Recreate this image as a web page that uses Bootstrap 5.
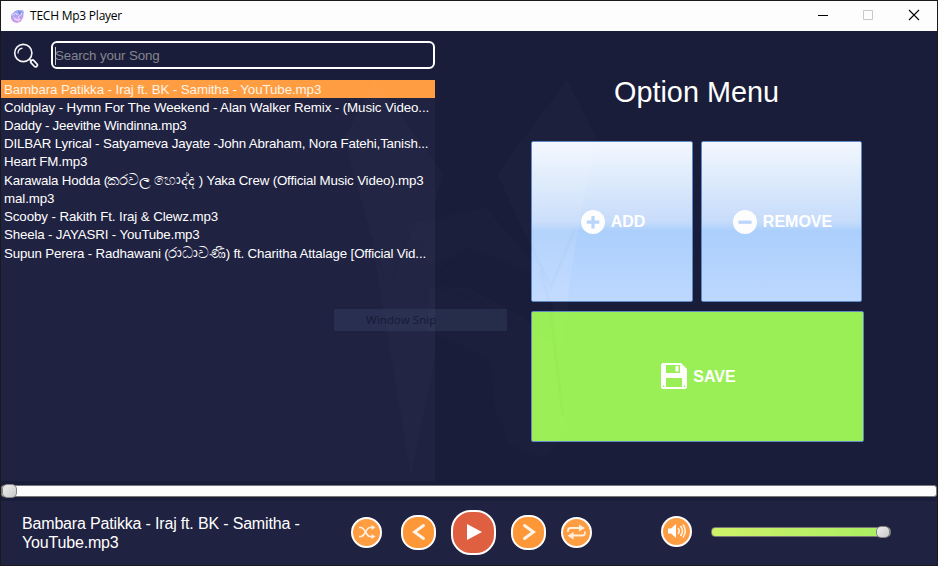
<!DOCTYPE html>
<html lang="en">
<head>
<meta charset="utf-8">
<title>TECH Mp3 Player</title>
<link href="https://cdn.jsdelivr.net/npm/bootstrap@5.3.0/dist/css/bootstrap.min.css" rel="stylesheet">
<style>
body{margin:0;background:#1a1d39;font-family:"Liberation Sans",Arial,sans-serif;color:#fff;overflow:hidden}
.app-window{width:938px;height:566px;border:1px solid #1a1a1d}
.title-bar{height:30px;background:#fdfdfd;color:#000;font:12px "Open Sans","Noto Sans",sans-serif;padding-left:9px}
.title-bar .caption-text{margin-left:5px;letter-spacing:-.23px;font-size:12px;padding-bottom:2px}
.win-btn{width:46px;height:30px}
.win-btn svg{margin-left:1px}
.main-area{height:450px}
.left-pane{width:434px}
.search-row{height:49px;padding:0 0 2px 11px}
.search-box{width:384px;height:28px;margin-left:10px;border:2px solid #fff;border-radius:6px;background:transparent;color:#84858f;font-size:13.33px;letter-spacing:-.14px;padding:2px 2px 0;line-height:22px}
.caret{width:1px;height:18px;background:#ccc;margin-right:-1px}
.song-list{height:401px;background:#202242;font-size:13.33px}
.song{height:18px;line-height:20px;padding:0 3px;white-space:nowrap;color:#fff;letter-spacing:-.1px}
.song.tall{height:19px;line-height:21px}
.song.tight{letter-spacing:-.165px}
.song.tighter{letter-spacing:-.22px}
.sinhala{font-size:15.2px;letter-spacing:0;line-height:1;margin-left:-1px}
.song.current{background:#ff9d42;color:#fff4e6}
.menu-title{font-size:28.8px;line-height:34px;margin-top:44px;padding-left:21px}
.option-grid{display:grid;grid-template-columns:162px 161px;gap:9px 8px;margin:32px 0 0 95.5px;width:333px}
.opt{border:1px solid #5f88c5;border-radius:2px;color:#fff;font-weight:700;font-size:16px;padding:0 0 0 3px;gap:6px}
.opt.blue{height:161px;background:linear-gradient(#f3f7ff 0%,#dceafb 25%,#c7dcfb 50%,#abcffc 56%,#bdd8ff 100%)}
.opt.green{height:131px;width:333px;grid-column:1/3;background:#9bef56}
.opt.green svg{margin-top:-1px}
.seek-wrap{height:20px;padding-top:4px}
.seek{height:12px;background:#fdfdfd;border:1px solid #777;border-radius:3px}
.knob{width:15px;height:14px;border:1px solid #858585;border-radius:5px;background:linear-gradient(135deg,#eee,#c9c9c9)}
.player-bar{height:64px;background:#202242;padding-bottom:2px}
.now-playing{width:330px;padding:2px 0 0 21px;font-size:16px;line-height:19px;letter-spacing:-.17px}
.round-btn{border:2px solid #fff;background:#ff9d42;color:#fff;padding:0;border-radius:50%;width:31px;height:31px;display:flex;align-items:center;justify-content:center;flex:none;margin-left:15px}
.round-btn.step{width:35px;height:35px;border-radius:16px;background:#fd9737}
.round-btn.play{width:45px;height:45px;border-radius:20px;background:#df5f41}
.round-btn.shuffle{margin-left:20px}
.round-btn.prev{margin-left:19px}
.round-btn.speaker{margin:0 0 2px 69px}
.volume{width:180px;height:10px;margin-left:19px;border:1px solid #777;border-radius:4px;background:linear-gradient(90deg,#cff269,#a8ee62)}
.volume .knob{width:14px;height:12px}
.ghost{left:0;top:0;pointer-events:none}
.snip{left:334px;top:309px;width:173px;height:22px;background:rgba(65,85,120,.27);color:#161936;font:11.6px/22px "Open Sans","Noto Sans",sans-serif;padding-left:32px;pointer-events:none}
svg{display:block;flex:none}
</style>
</head>
<body>
<div class="app-window position-relative">
 <header class="title-bar d-flex align-items-center">
  <svg width="15" height="15" viewBox="0 0 15 15"><defs><linearGradient id="lg" x1="0" y1="0" x2=".3" y2="1"><stop offset="0" stop-color="#91a9f2"/><stop offset="1" stop-color="#d49aec"/></linearGradient></defs><path d="M5 2 8 1l5 .3.8 2-.6 5-2.6 4.4-4 1.3-3.6-1.3L1 9.5V6z" fill="url(#lg)"/><path d="M2 6.5 6 4l1 2 4-3 1 2-4 3 2 3-4-1-3-2M4 10l5 2" fill="none" stroke="#f0e8ff" stroke-width=".8"/><path d="m8 2 4 1-3 3z" fill="#6f91e5"/></svg>
  <span class="caption-text">TECH Mp3 Player</span>
  <div class="d-flex ms-auto">
   <div class="win-btn"><svg width="46" height="30"><path d="M18 14.5h10" stroke="#000"/></svg></div>
   <div class="win-btn"><svg width="46" height="30"><path d="M17.5 9.5h9v9h-9z" fill="none" stroke="#c8c8c8"/></svg></div>
   <div class="win-btn"><svg width="46" height="30"><path d="m17 9 10 10m0-10L17 19" stroke="#000" stroke-width="1.1"/></svg></div>
  </div>
 </header>
 <main class="main-area d-flex">
  <section class="left-pane">
   <div class="search-row d-flex align-items-center">
    <svg width="29" height="29" viewBox="0 0 29 29" fill="none" stroke="#f5f5fa"><circle cx="11.3" cy="13" r="8.6" stroke-width="1.6"/><path d="M6 13.400c0-3 2-5 4.500-5.300" stroke-width="1.200"/><path d="m17.500 19.400 2 2" stroke-width="1.500"/><rect x="-1.700" y="-4" width="3.600" height="8" rx="1.800" transform="translate(22 23.500) rotate(-43)" stroke-width="1.700"/></svg>
    <div class="search-box d-flex align-items-center"><span class="caret"></span><span>Search your Song</span></div>
   </div>
   <div class="song-list">
    <div class="song current"><span>Bambara Patikka - Iraj ft. BK - Samitha - YouTube.mp3</span></div>
    <div class="song"><span>Coldplay - Hymn For The Weekend - Alan Walker Remix - (Music Video...</span></div>
    <div class="song tighter"><span>Daddy - Jeevithe Windinna.mp3</span></div>
    <div class="song tight"><span>DILBAR Lyrical - Satyameva Jayate -John Abraham, Nora Fatehi,Tanish...</span></div>
    <div class="song tight"><span>Heart FM.mp3</span></div>
    <div class="song tall tight"><span>Karawala Hodda (<span class="sinhala">කරවල හොද්ද</span> ) Yaka Crew (Official Music Video).mp3</span></div>
    <div class="song"><span>mal.mp3</span></div>
    <div class="song"><span>Scooby - Rakith Ft. Iraj &amp; Clewz.mp3</span></div>
    <div class="song tight"><span>Sheela - JAYASRI - YouTube.mp3</span></div>
    <div class="song tall tight"><span>Supun Perera - Radhawani (<span class="sinhala">රාධාවණී</span>) ft. Charitha Attalage [Official Vid...</span></div>
   </div>
  </section>
  <section class="flex-grow-1">
   <h1 class="menu-title fw-normal text-center mb-0">Option Menu</h1>
   <div class="option-grid">
    <button class="opt blue d-flex align-items-center justify-content-center"><svg width="24" height="24"><circle cx="12" cy="12" r="12" fill="#fdfdfd"/><path d="M12 6v12.500M5.800 12.200h12.500" stroke="#b9d5fb" stroke-width="3.200"/></svg>ADD</button>
    <button class="opt blue d-flex align-items-center justify-content-center"><svg width="24" height="24"><circle cx="12" cy="12" r="12" fill="#fdfdfd"/><path d="M5.500 12.200h13" stroke="#b9d5fb" stroke-width="3.200"/></svg>REMOVE</button>
    <button class="opt green d-flex align-items-center justify-content-center"><svg width="26" height="26"><path d="M1.500 0H20l6 6v18.500l-1.500 1.500h-23L0 24.500v-23z" fill="#fff"/><path d="M5 2h14v8H5zM5 15h16v9H5z" fill="#9bef56"/><path d="M14.500 3h3v5.500h-3z" fill="#fff"/><path d="M2 22.500h1.200V24H2zm20.800 0H24V24h-1.200z" fill="#9bef56"/></svg>SAVE</button>
   </div>
  </section>
 </main>
 <div class="seek-wrap"><div class="seek d-flex align-items-center"><span class="knob"></span></div></div>
 <footer class="player-bar d-flex align-items-center">
  <div class="now-playing">Bambara Patikka - Iraj ft. BK - Samitha - YouTube.mp3</div>
  <button class="round-btn shuffle"><svg width="18" height="14" viewBox="0 0 18 14" fill="none" stroke="#fff0de" stroke-width="1.700"><path d="M1 2.500h2C7 2.500 8 11.500 12 11.500h3M1 11.500h2C7 11.500 8 2.500 12 2.500h3"/><path d="m13.500 0 4 2.500-4 2.500zm0 9 4 2.500-4 2.500z" fill="#fff0de" stroke="none"/></svg></button>
  <button class="round-btn step prev"><svg width="14" height="18" viewBox="0 0 14 18"><path d="M11.500 2.500 2.500 9l9 6.500" fill="none" stroke="#fff4e8" stroke-width="2.900" stroke-linecap="round"/></svg></button>
  <button class="round-btn play"><svg width="16" height="16"><path d="M1 0v16l15-8z" fill="#fff"/></svg></button>
  <button class="round-btn step"><svg width="14" height="18" viewBox="0 0 14 18"><path d="M2.500 2.500 11.500 9l-9 6.500" fill="none" stroke="#fff4e8" stroke-width="2.900" stroke-linecap="round"/></svg></button>
  <button class="round-btn"><svg width="19" height="16" viewBox="0 0 19 16"><path d="M1 8V6.500Q1 4 4 4h9M18 7.500V9q0 2.500-3 2.500H6" fill="none" stroke="#fff0de" stroke-width="1.800"/><path d="m12 .5 6 3.500-6 3.500zM6.500 8v7.500l-6-3.800z" fill="#fff0de"/></svg></button>
  <button class="round-btn speaker"><svg width="20" height="16" viewBox="0 0 20 16"><path d="M1 5.500h3L9 1v14l-5-4.500H1z" fill="#fff"/><path d="M11 5q2.500 3 0 6M13.500 3q4 5 0 10M16 1.500q4.500 6.500 0 13" fill="none" stroke="#fff1e0" stroke-width="1.600"/></svg></button>
  <div class="volume d-flex align-items-center justify-content-end"><span class="knob"></span></div>
 </footer>
</div>
<!-- Faint emblem overlay -->
<svg class="ghost position-absolute" width="938" height="566">
 <g fill="#fff" fill-opacity=".015"><path d="M375 80 344 139 371 235 411 475 435 357V205L443 174z"/></g>
 <path d="M567 80 497 174 551 290 560 355 597 139z" fill="#fff" fill-opacity=".015"/>
 <path d="M532 142H597L580 215 567 301H532z" fill="#fff" fill-opacity=".09"/>
 <g fill="#fff" fill-opacity=".012"><path d="M408 225 485 207 530 258 570 290 536 275 470 248 430 265 408 232z"/><path d="M430 286 470 288 520 315 558 350 567 430 545 458 510 445 495 410 490 360 450 340 426 330z"/></g>
 <path d="M371 235 389 290 410 230M531 245 551 287 575 228M426 300Q424 275 460 258M430 286 475 300 510 320M540 270Q548 290 552 325L563 415" fill="none" stroke="#080a25" stroke-opacity=".016" stroke-width="3"/>
</svg>
<div class="snip position-absolute">Window Snip</div>
<script src="https://cdn.jsdelivr.net/npm/bootstrap@5.3.0/dist/js/bootstrap.bundle.min.js"></script>
</body>
</html>
